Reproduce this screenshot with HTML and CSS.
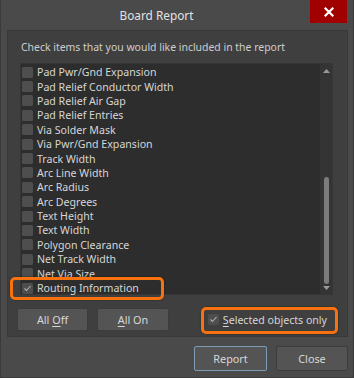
FILE: index.html
```html
<!DOCTYPE html>
<html>
<head>
<meta charset="utf-8">
<link rel="stylesheet" href="styles.css">
</head>
<body>
<div class="window">
  <div class="titlebar">
    <div class="title">Board Report</div>
    <div class="close"><svg width="10" height="10" viewBox="0 0 10 10"><path d="M1.5 1.5 L8.5 8.5 M8.5 1.5 L1.5 8.5" stroke="#fff" stroke-width="2.2" stroke-linecap="square"/></svg></div>
  </div>
  <div class="panel">
    <div class="hint">Check items that you would like included in the report</div>
    <div class="listbox">
      <div class="items">
        <div class="item"><span class="cb"></span>Pad Pwr/Gnd Expansion</div>
        <div class="item"><span class="cb"></span>Pad Relief Conductor Width</div>
        <div class="item"><span class="cb"></span>Pad Relief Air Gap</div>
        <div class="item"><span class="cb"></span>Pad Relief Entries</div>
        <div class="item"><span class="cb"></span>Via Solder Mask</div>
        <div class="item"><span class="cb"></span>Via Pwr/Gnd Expansion</div>
        <div class="item"><span class="cb"></span>Track Width</div>
        <div class="item"><span class="cb"></span>Arc Line Width</div>
        <div class="item"><span class="cb"></span>Arc Radius</div>
        <div class="item"><span class="cb"></span>Arc Degrees</div>
        <div class="item"><span class="cb"></span>Text Height</div>
        <div class="item"><span class="cb"></span>Text Width</div>
        <div class="item"><span class="cb"></span>Polygon Clearance</div>
        <div class="item"><span class="cb"></span>Net Track Width</div>
        <div class="item"><span class="cb"></span>Net Via Size</div>
        <div class="item"><span class="cb checked"><svg width="9" height="9" viewBox="0 0 9 9"><path d="M1.5 4.5 L3.5 6.5 L7.5 2" fill="none" stroke="#b0b0b0" stroke-width="1.1"/></svg></span>Routing Information</div>
      </div>
      <div class="scrollbar">
        <svg class="arrow" width="7" height="4" viewBox="0 0 7 4"><path d="M0 4 L3.5 0 L7 4 Z" fill="#9a9a9a"/></svg>
        <div class="track"><div class="thumb"></div></div>
        <svg class="arrow" width="7" height="4" viewBox="0 0 7 4"><path d="M0 0 L3.5 4 L7 0 Z" fill="#9a9a9a"/></svg>
      </div>
    </div>
    <div class="controls">
      <button class="btn btn-off">All <u>O</u>ff</button>
      <button class="btn btn-on"><u>A</u>ll On</button>
      <div class="spacer"></div>
      <div class="sel"><span class="cb checked"><svg width="9" height="9" viewBox="0 0 9 9"><path d="M1.5 4.5 L3.5 6.5 L7.5 2" fill="none" stroke="#b0b0b0" stroke-width="1.1"/></svg></span><u>S</u>elected objects only</div>
    </div>
  </div>
  <div class="footer">
    <button class="btn btn-report">Report</button>
    <button class="btn btn-close">Close</button>
  </div>
  <div class="mark mark-routing"></div>
  <div class="mark mark-selected"></div>
</div>
</body>
</html>
```
FILE: styles.css
```css
* { box-sizing: border-box; }
html, body { margin: 0; padding: 0; background: #4a4a4a; }
body { font-family: "Noto Sans", "Segoe UI", sans-serif; font-size: 10.6px; color: #d4d4d4; }
.window {
  position: relative;
  width: 354px;
  height: 378px;
  background: #4a4a4a;
  border-left: 1px solid #3a3a3a;
  border-right: 1px solid #3a3a3a;
  border-bottom: 1px solid #3a3a3a;
  display: flex;
  flex-direction: column;
}
.titlebar {
  height: 30px;
  display: flex;
  align-items: flex-start;
}
.title {
  flex: 1;
  text-align: center;
  font-size: 11.8px;
  color: #e2e2e2;
  line-height: 31px;
  padding-left: 2px;
}
.close {
  width: 37px;
  height: 23px;
  margin-right: 6px;
  background: #a10000;
  display: flex;
  align-items: center;
  justify-content: center;
}
.close svg { display: block; }
.panel {
  margin: 0 5px 0 6px;
  height: 307px;
  background: #3f3f3f;
  border: 1px solid #383838;
  padding: 0 14px 0 12px;
  display: flex;
  flex-direction: column;
}
.hint {
  height: 32px;
  line-height: 32px;
  color: #cdcdcd;
  padding-left: 1px;
  font-size: 10.45px;
}
.listbox {
  height: 232px;
  background: #2d2d2d;
  border: 1px solid #363636;
  display: flex;
}
.items {
  flex: 1;
  padding-top: 1px;
}
.item {
  height: 14.4px;
  display: flex;
  align-items: center;
  white-space: nowrap;
  color: #d6d6d6;
}
.cb {
  width: 11px;
  height: 11px;
  background: #4e4e4e;
  border-radius: 1.5px;
  margin: 0 4px 0 1px;
  flex: none;
  display: flex;
  align-items: center;
  justify-content: center;
}
.cb svg { display: block; }
.scrollbar {
  width: 12px;
  background: #343434;
  display: flex;
  flex-direction: column;
  align-items: center;
  padding: 5px 0 4px;
}
.arrow { display: block; flex: none; }
.track {
  flex: 1;
  width: 100%;
  display: flex;
  flex-direction: column;
  justify-content: flex-end;
  align-items: center;
  padding: 2px 0 2px;
}
.thumb {
  width: 5px;
  height: 107px;
  background: #7c7c7c;
  border-radius: 3px;
}
.controls {
  display: flex;
  align-items: center;
  margin-left: -3px;
  margin-top: 13px;
}
.btn {
  font-family: inherit;
  font-size: 10.8px;
  color: #d8d8d8;
  background: #545454;
  border: 1px solid #3c3c3c;
  border-radius: 2px;
  padding: 0;
  height: 23px;
}
.btn u { text-decoration-thickness: 1px; text-underline-offset: 2px; }
.btn-off { width: 71px; }
.btn-on { width: 72px; margin-left: 9px; }
.spacer { flex: 1; }
.sel {
  display: flex;
  align-items: center;
  color: #d6d6d6;
  margin-right: 6px;
  white-space: nowrap;
}
.sel u { text-underline-offset: 2px; }
.sel .cb { margin: 0 4px 0 0; }
.footer {
  display: flex;
  justify-content: flex-end;
  gap: 9px;
  padding: 9px 5px 0 0;
}
.btn-report { width: 73px; height: 25px; border-color: #7d9cb8; }
.btn-close { width: 72px; height: 25px; }
.mark {
  position: absolute;
  border: 3px solid #f7720f;
  border-radius: 5px;
  box-shadow: 0 0 2px rgba(0,0,0,0.5);
}
.mark-routing { left: 9px; top: 277px; width: 154px; height: 23px; }
.mark-selected { left: 200px; top: 307px; width: 137px; height: 27px; }
```
